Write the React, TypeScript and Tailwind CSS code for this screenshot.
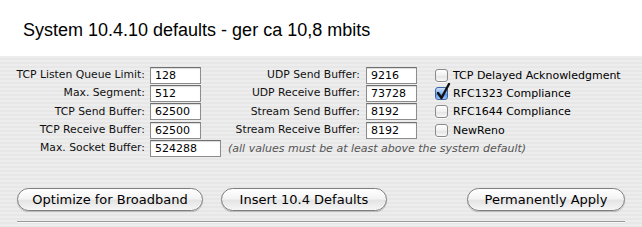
import React from "react";

const ui = { fontFamily: '"DejaVu Sans", "Noto Sans", sans-serif' };

function Field({ value, w = "w-[51px]" }: { value: string; w?: string }) {
  return (
    <div
      className={`${w} h-[17px] bg-white border border-[#8c8c8c] border-t-[#6f6f6f] shadow-[inset_0_1px_1px_rgba(0,0,0,0.15)] flex items-center pl-[4px] text-[11px] text-black leading-none`}
    >
      {value}
    </div>
  );
}

function Label({ text }: { text: string }) {
  return (
    <div className="text-right text-[10.8px] text-[#111] leading-none whitespace-nowrap">{text}</div>
  );
}

function Check({ label, checked = false }: { label: string; checked?: boolean }) {
  return (
    <div className="flex items-center gap-[5px] text-[11px] text-black leading-none whitespace-nowrap">
      <span className="relative w-[13px] h-[13px] shrink-0">
        {checked ? (
          <span className="absolute inset-0 rounded-[3px] border border-[#3c63a6] bg-[linear-gradient(to_bottom,#cfe3fb,#7fb0ee_50%,#4f8fe0_51%,#9cc6f6)]" />
        ) : (
          <span className="absolute inset-0 rounded-[3px] border border-[#8a8a8a] bg-[linear-gradient(to_bottom,#ffffff,#f0f0f0_50%,#e2e2e2_51%,#f8f8f8)] shadow-[0_1px_0_rgba(255,255,255,0.8)]" />
        )}
        {checked && (
          <svg className="absolute left-[1px] top-[-4px]" width="15" height="17" viewBox="0 0 15 17">
            <path d="M2 10 L5.5 15 L13 1" fill="none" stroke="#111" strokeWidth="2.4" strokeLinecap="round" strokeLinejoin="round" />
          </svg>
        )}
      </span>
      <span>{label}</span>
    </div>
  );
}

function AquaButton({ text, w }: { text: string; w: string }) {
  return (
    <div
      className={`${w} h-[23px] rounded-full border border-[#7e7e7e] bg-[linear-gradient(to_bottom,#ffffff_0%,#f4f4f4_45%,#e4e4e4_55%,#f6f6f6_100%)] shadow-[0_1px_1px_rgba(0,0,0,0.2)] flex items-center justify-center text-[13px] text-black leading-none`}
    >
      {text}
    </div>
  );
}

export default function App() {
  return (
    <div className="w-[642px] h-[227px] overflow-hidden" style={ui}>
      <div className="h-[56px] bg-white pt-[19px] pl-[23px]">
        <div
          className="text-[18px] leading-[22px] text-black"
          style={{ fontFamily: '"Liberation Sans", Arial, sans-serif' }}
        >
          System 10.4.10 defaults - ger ca 10,8 mbits
        </div>
      </div>
      <div className="h-[171px] bg-[repeating-linear-gradient(to_bottom,#ededed_0px,#ededed_2px,#e7e7e7_2px,#e7e7e7_4px)] pt-[10px]">
        <div className="grid grid-cols-[150px_51px_165px_50px_1fr] auto-rows-[18.4px] items-center">
          <div className="pr-[5px]"><Label text="TCP Listen Queue Limit:" /></div>
          <Field value="128" />
          <div className="pr-[6px]"><Label text="UDP Send Buffer:" /></div>
          <Field value="9216" />
          <div className="pl-[19px]"><Check label="TCP Delayed Acknowledgment" /></div>

          <div className="pr-[5px]"><Label text="Max. Segment:" /></div>
          <Field value="512" />
          <div className="pr-[6px]"><Label text="UDP Receive Buffer:" /></div>
          <Field value="73728" />
          <div className="pl-[19px]"><Check label="RFC1323 Compliance" checked /></div>

          <div className="pr-[5px]"><Label text="TCP Send Buffer:" /></div>
          <Field value="62500" />
          <div className="pr-[6px]"><Label text="Stream Send Buffer:" /></div>
          <Field value="8192" />
          <div className="pl-[19px]"><Check label="RFC1644 Compliance" /></div>

          <div className="pr-[5px]"><Label text="TCP Receive Buffer:" /></div>
          <Field value="62500" />
          <div className="pr-[6px]"><Label text="Stream Receive Buffer:" /></div>
          <Field value="8192" />
          <div className="pl-[19px]"><Check label="NewReno" /></div>

          <div className="pr-[5px]"><Label text="Max. Socket Buffer:" /></div>
          <div className="col-span-4 flex items-center gap-[7px]">
            <Field value="524288" w="w-[71px]" />
            <span className="text-[11px] italic text-[#555] leading-none whitespace-nowrap">
              (all values must be at least above the system default)
            </span>
          </div>
        </div>
        <div className="flex items-center pl-[17px] pr-[17px] mt-[30px]">
          <AquaButton text="Optimize for Broadband" w="w-[186px]" />
          <div className="ml-[18px]">
            <AquaButton text="Insert 10.4 Defaults" w="w-[166px]" />
          </div>
          <div className="ml-auto">
            <AquaButton text="Permanently Apply" w="w-[158px]" />
          </div>
        </div>
        <div className="mx-[17px] mt-[10px] border-t border-[#9a9a9a] border-b border-b-white/70" />
      </div>
    </div>
  );
}
